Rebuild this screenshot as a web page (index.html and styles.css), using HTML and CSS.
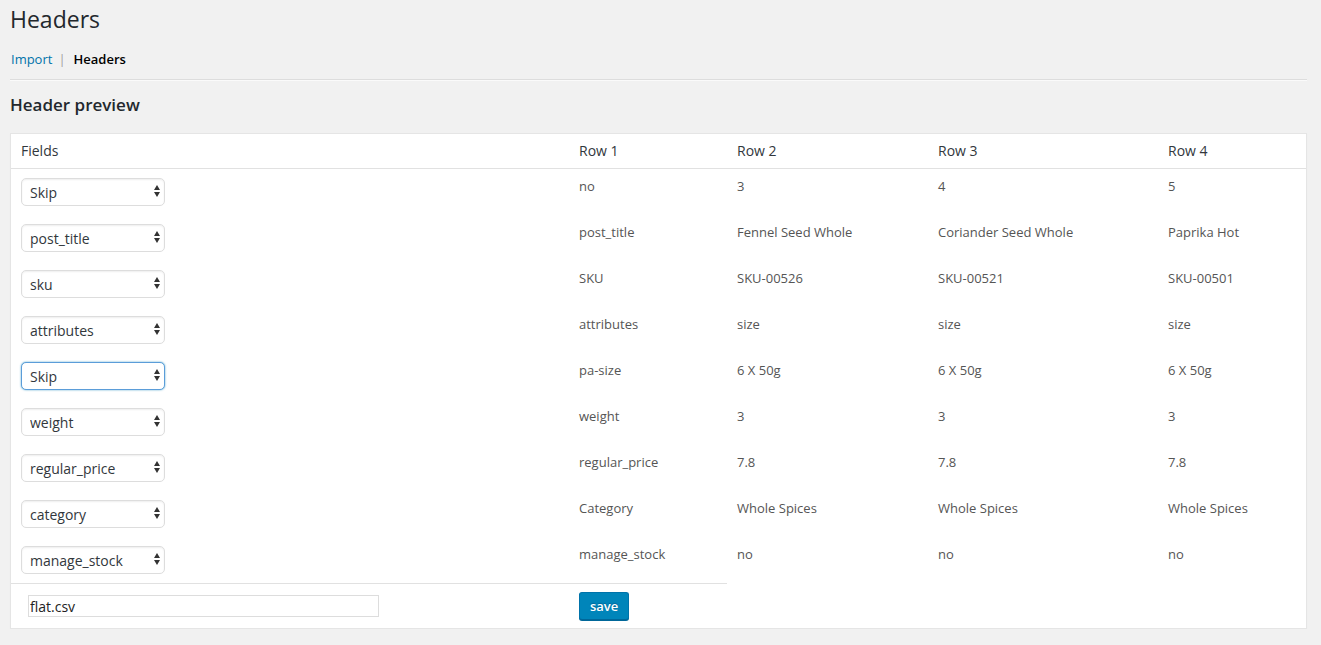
FILE: index.html
```html
<!DOCTYPE html>
<html lang="en">
<head>
    <meta charset="UTF-8">
    <title>Headers</title>
    <link rel="stylesheet" href="styles.css">
</head>
<body>
    <div class="wrap">
        <h1>Headers</h1>
        <div class="subnav">
            <a href="#">Import</a><span class="sep">|</span><strong>Headers</strong>
        </div>
        <hr>
        <h2>Header preview</h2>

        <table class="preview">
            <colgroup>
                <col class="col-fields">
                <col class="col-r1">
                <col class="col-r2">
                <col class="col-r3">
                <col class="col-r4">
            </colgroup>
            <thead>
                <tr>
                    <th>Fields</th>
                    <th>Row 1</th>
                    <th>Row 2</th>
                    <th>Row 3</th>
                    <th>Row 4</th>
                </tr>
            </thead>
            <tbody>
                <tr>
                    <td><span class="select-wrap"><select><option>Skip</option></select></span></td>
                    <td>no</td><td>3</td><td>4</td><td>5</td>
                </tr>
                <tr>
                    <td><span class="select-wrap"><select><option>post_title</option></select></span></td>
                    <td>post_title</td><td>Fennel Seed Whole</td><td>Coriander Seed Whole</td><td>Paprika Hot</td>
                </tr>
                <tr>
                    <td><span class="select-wrap"><select><option>sku</option></select></span></td>
                    <td>SKU</td><td>SKU-00526</td><td>SKU-00521</td><td>SKU-00501</td>
                </tr>
                <tr>
                    <td><span class="select-wrap"><select><option>attributes</option></select></span></td>
                    <td>attributes</td><td>size</td><td>size</td><td>size</td>
                </tr>
                <tr>
                    <td><span class="select-wrap"><select class="focused"><option>Skip</option></select></span></td>
                    <td>pa-size</td><td>6 X 50g</td><td>6 X 50g</td><td>6 X 50g</td>
                </tr>
                <tr>
                    <td><span class="select-wrap"><select><option>weight</option></select></span></td>
                    <td>weight</td><td>3</td><td>3</td><td>3</td>
                </tr>
                <tr>
                    <td><span class="select-wrap"><select><option>regular_price</option></select></span></td>
                    <td>regular_price</td><td>7.8</td><td>7.8</td><td>7.8</td>
                </tr>
                <tr>
                    <td><span class="select-wrap"><select><option>category</option></select></span></td>
                    <td>Category</td><td>Whole Spices</td><td>Whole Spices</td><td>Whole Spices</td>
                </tr>
                <tr>
                    <td><span class="select-wrap"><select><option>manage_stock</option></select></span></td>
                    <td>manage_stock</td><td>no</td><td>no</td><td>no</td>
                </tr>
            </tbody>
            <tfoot>
                <tr>
                    <td class="foot-cell"><input type="text" class="file-name" value="flat.csv"></td>
                    <td class="foot-cell"><button type="button" class="button-primary">save</button></td>
                    <td></td><td></td><td></td>
                </tr>
            </tfoot>
        </table>
    </div>
</body>
</html>
```

FILE: styles.css
```css
/* Reset */
body, h1, h2, table, input, select, button {
    margin: 0;
    padding: 0;
    box-sizing: border-box;
}

body {
    font-family: "Open Sans", "Liberation Sans", sans-serif;
    font-size: 13px;
    color: #444;
    background-color: #f1f1f1;
}

.wrap {
    padding: 0 14px 0 10px;
}

h1 {
    font-size: 23px;
    font-weight: 400;
    line-height: 29px;
    color: #23282d;
    padding: 5px 0 4px;
}

.subnav {
    margin-top: 11px;
    padding-left: 1px;
    line-height: 20px;
    color: #666;
}

.subnav a {
    color: #0073aa;
    text-decoration: none;
}

.subnav .sep {
    margin: 0 8px 0 6px;
    color: #a0a0a0;
}

.subnav strong {
    color: #000;
    font-weight: 600;
}

hr {
    margin: 10px 0 0;
    height: 0;
    border: 0;
    border-top: 1px solid #ddd;
    border-bottom: 1px solid #fafafa;
}

h2 {
    margin-top: 13px;
    font-size: 17px;
    font-weight: 600;
    line-height: 22px;
    color: #23282d;
}

/* Preview table */
.preview {
    margin-top: 17px;
    width: 100%;
    table-layout: fixed;
    border-collapse: separate;
    border-spacing: 0;
    background-color: #fff;
    border: 1px solid #e5e5e5;
    box-shadow: 0 1px 1px rgba(0, 0, 0, 0.04);
}

.col-fields { width: 558px; }
.col-r1 { width: 158px; }
.col-r2 { width: 201px; }
.col-r3 { width: 230px; }
.col-r4 { width: 148px; }

.preview th {
    text-align: left;
    font-size: 14px;
    font-weight: 400;
    line-height: 18px;
    color: #32373c;
    padding: 8px 10px;
    border-bottom: 1px solid #e1e1e1;
}

.preview tbody td {
    vertical-align: top;
    padding: 8px 10px 8px;
    line-height: 19.5px;
    color: #555;
}

.preview tbody td:first-child {
    padding-top: 9px;
    padding-bottom: 9px;
}

/* Select boxes */
.select-wrap {
    position: relative;
    display: inline-block;
    vertical-align: top;
}

.select-wrap::before,
.select-wrap::after {
    content: "";
    position: absolute;
    right: 5px;
    border-left: 3.5px solid transparent;
    border-right: 3.5px solid transparent;
    pointer-events: none;
}

.select-wrap::before {
    top: 7px;
    border-bottom: 5px solid #333;
}

.select-wrap::after {
    top: 14px;
    border-top: 5px solid #333;
}

select {
    -webkit-appearance: none;
    appearance: none;
    display: block;
    width: 144px;
    height: 28px;
    padding: 0 20px 0 8px;
    font-family: "Open Sans", "Liberation Sans", sans-serif;
    font-size: 14px;
    color: #32373c;
    background-color: #fff;
    border: 1px solid #ddd;
    border-radius: 5px;
    box-shadow: inset 0 1px 2px rgba(0, 0, 0, 0.07);
    outline: none;
}

select.focused {
    border-color: #5b9dd9;
    box-shadow: 0 0 2px rgba(30, 140, 190, 0.8);
}

/* Footer row */
.preview tfoot td {
    vertical-align: middle;
    padding: 8px 10px;
}

.preview tfoot td.foot-cell {
    border-top: 1px solid #e1e1e1;
}

.file-name {
    margin-left: 7px;
    width: 351px;
    height: 22px;
    padding: 0 1px;
    font-family: "Open Sans", "Liberation Sans", sans-serif;
    font-size: 14px;
    color: #222;
    border: 1px solid #ddd;
    border-radius: 0;
    background: #fff;
    vertical-align: middle;
}

.button-primary {
    height: 28px;
    padding: 0 10px 1px;
    font-family: "Open Sans", "Liberation Sans", sans-serif;
    font-size: 13px;
    font-weight: 600;
    line-height: 26px;
    color: #fff;
    background-color: #0085ba;
    border: 1px solid #0073aa;
    border-bottom-color: #006799;
    border-radius: 3px;
    box-shadow: 0 1px 0 #006799;
    text-shadow: 0 -1px 1px #006799;
    cursor: pointer;
    vertical-align: middle;
}
```
